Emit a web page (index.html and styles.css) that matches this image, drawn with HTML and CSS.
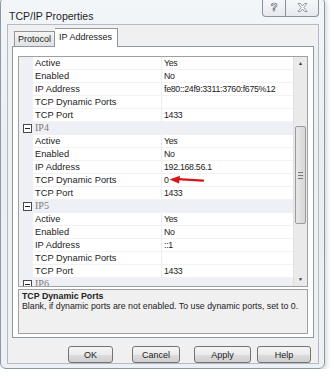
FILE: index.html
```html
<!DOCTYPE html>
<html lang="en">
<head>
<meta charset="UTF-8">
<title>TCP/IP Properties</title>
<link rel="stylesheet" href="styles.css">
</head>
<body>

<div class="window">
    <div class="titlebar">
        <span class="title">TCP/IP Properties</span>
        <div class="caption">
            <span class="cap-btn cap-help">?</span>
            <span class="cap-btn cap-close">
                <svg width="11" height="9" viewBox="0 0 11 9">
                    <path d="M1 0.5 H3.5 L5.5 3 L7.5 0.5 H10 L6.8 4.5 L10 8.5 H7.5 L5.5 6 L3.5 8.5 H1 L4.2 4.5 Z" fill="#fff" stroke="#7c838c" stroke-width="0.8"/>
                </svg>
            </span>
        </div>
    </div>

    <div class="client">
        <div class="tabs">
            <span class="tab">Protocol</span>
            <span class="tab active">IP Addresses</span>
        </div>

        <div class="page">
            <div class="grid">
                <div class="rows">
                    <div class="row"><span class="gutter"></span><span class="name">Active</span><span class="value">Yes</span></div>
                    <div class="row"><span class="gutter"></span><span class="name">Enabled</span><span class="value">No</span></div>
                    <div class="row"><span class="gutter"></span><span class="name">IP Address</span><span class="value">fe80::24f9:3311:3760:f675%12</span></div>
                    <div class="row"><span class="gutter"></span><span class="name">TCP Dynamic Ports</span><span class="value"></span></div>
                    <div class="row"><span class="gutter"></span><span class="name">TCP Port</span><span class="value">1433</span></div>
                    <div class="row category"><span class="gutter"><i class="toggle"></i></span><span class="name">IP4</span><span class="value"></span></div>
                    <div class="row"><span class="gutter"></span><span class="name">Active</span><span class="value">Yes</span></div>
                    <div class="row"><span class="gutter"></span><span class="name">Enabled</span><span class="value">No</span></div>
                    <div class="row"><span class="gutter"></span><span class="name">IP Address</span><span class="value">192.168.56.1</span></div>
                    <div class="row"><span class="gutter"></span><span class="name">TCP Dynamic Ports</span><span class="value">0</span></div>
                    <div class="row"><span class="gutter"></span><span class="name">TCP Port</span><span class="value">1433</span></div>
                    <div class="row category"><span class="gutter"><i class="toggle"></i></span><span class="name">IP5</span><span class="value"></span></div>
                    <div class="row"><span class="gutter"></span><span class="name">Active</span><span class="value">Yes</span></div>
                    <div class="row"><span class="gutter"></span><span class="name">Enabled</span><span class="value">No</span></div>
                    <div class="row"><span class="gutter"></span><span class="name">IP Address</span><span class="value">::1</span></div>
                    <div class="row"><span class="gutter"></span><span class="name">TCP Dynamic Ports</span><span class="value"></span></div>
                    <div class="row"><span class="gutter"></span><span class="name">TCP Port</span><span class="value">1433</span></div>
                    <div class="row category"><span class="gutter"><i class="toggle"></i></span><span class="name">IP6</span><span class="value"></span></div>

                    <svg class="arrow" width="36" height="10" viewBox="0 0 36 10">
                        <path d="M9 4.2 L34 5.6" stroke="#d8141a" stroke-width="2.2" stroke-linecap="round"/>
                        <path d="M0.5 4.5 L11 0.8 L10 8.4 Z" fill="#d8141a"/>
                    </svg>
                </div>
                <div class="scrollbar">
                    <span class="sb-arrow">&#9650;</span>
                    <div class="sb-track">
                        <div class="sb-thumb"><span class="grip"></span></div>
                    </div>
                    <span class="sb-arrow">&#9660;</span>
                </div>
            </div>

            <div class="desc">
                <p class="desc-title">TCP Dynamic Ports</p>
                <p class="desc-text">Blank, if dynamic ports are not enabled. To use dynamic ports, set to 0.</p>
            </div>
        </div>

        <div class="buttons">
            <button class="btn btn-ok">OK</button>
            <button class="btn btn-cancel">Cancel</button>
            <button class="btn btn-apply">Apply</button>
            <button class="btn btn-help">Help</button>
        </div>
    </div>
</div>

</body>
</html>
```

FILE: styles.css
```css
body {
    margin: 0;
    padding: 0;
    background-color: #fff;
    font-family: "Liberation Sans", Arial, sans-serif;
    color: #222;
}

.window {
    width: 325px;
    height: 372px;
    margin: -3px 0 0 0;
    border: 1px solid #8d98a4;
    border-radius: 6px;
    background: linear-gradient(to bottom, #f3f6f9, #e9eef3 40%, #edf1f5);
    box-shadow: 2px 2px 4px rgba(0, 0, 0, 0.15);
    box-sizing: border-box;
    padding: 0 5px 5px 6px;
    display: flex;
    flex-direction: column;
}

.titlebar {
    height: 26px;
    display: flex;
    align-items: flex-start;
    justify-content: space-between;
    flex-shrink: 0;
}

.title {
    font-size: 10.5px;
    color: #1e1e1e;
    margin: 12px 0 0 2px;
}

.caption {
    display: flex;
    margin-right: 0;
}

.cap-btn {
    height: 19px;
    border: 1px solid #8a929c;
    border-top: none;
    background: linear-gradient(to bottom, #f7f9fb, #e6eaef);
    display: flex;
    align-items: center;
    justify-content: center;
    box-sizing: border-box;
}

.cap-help {
    width: 24px;
    border-radius: 0 0 0 4px;
    font-size: 11px;
    color: #fff;
    -webkit-text-stroke: 0.7px #6d747d;
    font-weight: bold;
}

.cap-close {
    width: 33px;
    border-left: none;
    border-radius: 0 0 4px 0;
}

.client {
    flex: 1;
    background-color: #f0f0f0;
    border: 1px solid #b3bcc6;
    display: flex;
    flex-direction: column;
    padding: 2px 4px 0 4px;
}

.tabs {
    display: flex;
    align-items: flex-end;
    height: 19px;
    padding-left: 2px;
    position: relative;
    z-index: 1;
}

.tab {
    font-size: 9px;
    height: 14px;
    line-height: 14px;
    padding: 0 3px;
    border: 1px solid #8e96a0;
    border-bottom: none;
    background: linear-gradient(to bottom, #f4f4f4, #e2e2e2);
}

.tab.active {
    height: 18px;
    line-height: 17px;
    background: #fff;
    border-left: none;
    padding: 0 5px 0 4px;
    margin-bottom: -1px;
}

.page {
    background-color: #fff;
    border: 1px solid #8e96a0;
    height: 292px;
    box-sizing: border-box;
    padding: 9px 5px 3px 5px;
    display: flex;
    flex-direction: column;
    gap: 2px;
}

.grid {
    height: 231px;
    border: 1px solid #a0a0a0;
    display: flex;
    overflow: hidden;
    box-sizing: border-box;
}

.rows {
    flex: 1;
    position: relative;
    font-size: 9.3px;
}

.row {
    display: grid;
    grid-template-columns: 14px 129px 1fr;
    height: 13px;
    line-height: 12px;
}

.gutter {
    background-color: #eef0f5;
    display: flex;
    align-items: center;
    justify-content: center;
}

.name {
    padding-left: 2px;
    border-bottom: 1px solid #f2f2f2;
    border-right: 1px solid #ececec;
    white-space: nowrap;
    overflow: hidden;
}

.value {
    padding-left: 2px;
    border-bottom: 1px solid #f2f2f2;
    white-space: nowrap;
    overflow: hidden;
    font-size: 8.8px;
    letter-spacing: -0.3px;
}

.category .name,
.category .value {
    background-color: #eef0f5;
    border-color: #eef0f5;
}

.category .name {
    font-family: "Liberation Serif", "Times New Roman", serif;
    font-size: 10px;
    color: #7a7a7a;
}

.toggle {
    width: 7px;
    height: 7px;
    border: 1px solid #4a4a4a;
    background: #fff;
    position: relative;
    margin-left: 2px;
}

.toggle::after {
    content: "";
    position: absolute;
    left: 1px;
    right: 1px;
    top: 3px;
    height: 1px;
    background: #222;
}

.arrow {
    position: absolute;
    left: 150px;
    top: 118px;
}

.scrollbar {
    width: 13px;
    background-color: #eaeaea;
    border-left: 1px solid #e0e0e0;
    display: flex;
    flex-direction: column;
    align-items: center;
}

.sb-arrow {
    font-size: 5px;
    color: #333;
    height: 13px;
    line-height: 13px;
}

.sb-track {
    flex: 1;
    width: 100%;
    position: relative;
}

.sb-thumb {
    margin-top: 56px;
    height: 96px;
    margin-left: 1px;
    margin-right: 1px;
    border: 1px solid #9a9a9a;
    border-radius: 2px;
    background: linear-gradient(to right, #e8e8e8, #d6d6d6);
    display: flex;
    align-items: center;
    justify-content: center;
}

.grip {
    width: 5px;
    height: 5px;
    border-top: 1px solid #777;
    border-bottom: 1px solid #777;
    position: relative;
}

.grip::after {
    content: "";
    position: absolute;
    left: 0;
    right: 0;
    top: 2px;
    height: 1px;
    background: #777;
}

.desc {
    flex: 1;
    background-color: #f0f0f0;
    border: 1px solid #a0a0a0;
    padding: 1px 3px;
    font-size: 8.8px;
}

.desc p {
    margin: 0;
    line-height: 10px;
    white-space: nowrap;
}

.desc-title {
    font-weight: bold;
}

.buttons {
    display: flex;
    justify-content: flex-end;
    padding: 8px 3px 0 0;
}

.btn {
    font-family: "Liberation Sans", Arial, sans-serif;
    font-size: 9px;
    color: #222;
    height: 17px;
    padding: 0;
    border: 1px solid #737373;
    border-radius: 3px;
    background: linear-gradient(to bottom, #f5f5f5 0%, #ebebeb 50%, #dddddd 51%, #cfcfcf 100%);
}

.btn-ok { width: 45px; margin-right: 19px; }
.btn-cancel { width: 48px; margin-right: 14px; }
.btn-apply { width: 57px; margin-right: 6px; }
.btn-help { width: 54px; }
```
